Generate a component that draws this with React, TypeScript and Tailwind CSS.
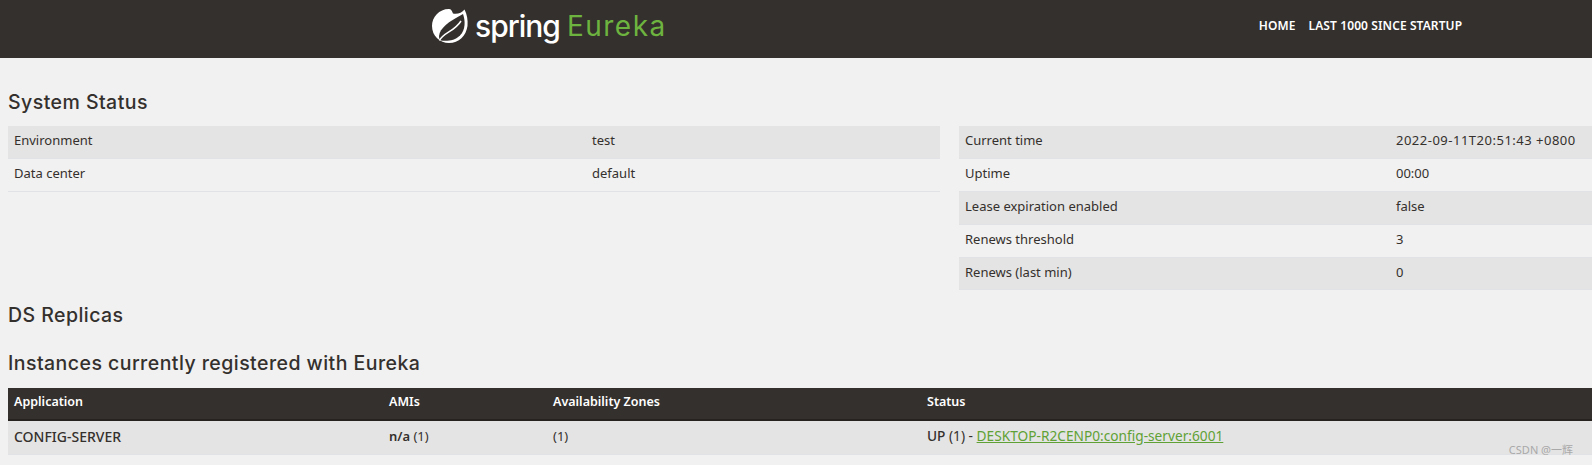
const body = "[font-family:'Noto_Sans',sans-serif]";

const leftRows = [
  ["Environment", "test"],
  ["Data center", "default"],
];

const rightRows = [
  ["Current time", "2022-09-11T20:51:43 +0800"],
  ["Uptime", "00:00"],
  ["Lease expiration enabled", "false"],
  ["Renews threshold", "3"],
  ["Renews (last min)", "0"],
];

function StatusTable({ rows, labelWidth, className }: { rows: string[][]; labelWidth: string; className: string }) {
  return (
    <div className={className}>
      {rows.map(([label, value], i) => (
        <div
          key={label}
          className={`flex h-[32.9px] items-center border-b border-[#e0e2e5] pb-[2px] text-[13px] text-[#34302d] ${i % 2 === 0 ? "bg-[#e4e4e4]" : ""}`}
        >
          <div className={`${labelWidth} shrink-0 px-1.5`}>{label}</div>
          <div className={`px-1.5 ${label === "Current time" ? "tracking-[0.5px]" : ""}`}>{value}</div>
        </div>
      ))}
    </div>
  );
}

function Heading({ children, className }: { children: string; className: string }) {
  return <h1 className={`font-['Inter',sans-serif] text-[19.500px] leading-6 font-medium tracking-[0.45px] text-[#34302d] ${className}`}>{children}</h1>;
}

function SpringLeaf() {
  return (
    <svg width="38" height="36" viewBox="0 0 38 36" className="shrink-0">
      <path
        fill="#fff"
        d="M18 1C8 1 1 9 1 18C1 28 9 35 18 35C28 35 35 28 36.500 18C37 12 36 6 33.500 1.500C31 5 26 6.500 22 5.500C21 3 20 1 18 1Z"
      />
      <path fill="#34302d" d="M8 28C9 20 17 14 32 6C34.500 13 34.500 22 29 27.500C24 32.500 16 33.500 10 32.500C8.500 31.500 8 30 8 28Z" />
      <path fill="none" stroke="#fff" strokeWidth="1.500" d="M8.500 32.500C13 24 23 24 30 13" />
    </svg>
  );
}

export default function App() {
  return (
    <div className={`h-[465px] w-[1592px] overflow-hidden bg-[#f1f1f1] ${body}`}>
      <nav className="flex h-[58px] items-center bg-[#34302d] pb-[6px]">
        <div className="ml-[431px] flex items-center">
          <SpringLeaf />
          <span className="ml-[6px] font-['Inter',sans-serif] text-[30px] leading-none font-medium tracking-[-1px] text-white">spring</span>
          <span className="ml-[7px] font-['Inter',sans-serif] text-[28px] leading-none font-normal tracking-[1.500px] text-[#6db33f]">Eureka</span>
        </div>
        <div className="ml-[592px] flex gap-[13px] text-[12px] font-semibold tracking-[0.1px] text-white">
          <a>HOME</a>
          <a>LAST 1000 SINCE STARTUP</a>
        </div>
      </nav>

      <div className="pl-2">
        <Heading className="mt-[32px]">System Status</Heading>
        <div className="mt-[12px] flex h-[175px] items-start">
          <StatusTable rows={leftRows} labelWidth="w-[578px]" className="w-[932px]" />
          <StatusTable rows={rightRows} labelWidth="w-[431px]" className="ml-[19px] w-[633px]" />
        </div>
        <Heading className="mt-[2px]">DS Replicas</Heading>
        <Heading className="mt-[24px]">Instances currently registered with Eureka</Heading>

        <div className="mt-[13px]">
          <div className="flex h-[33px] items-center border-b-2 border-[#26221f] bg-[#34302d] pb-0.5 text-[12.500px] font-semibold text-white">
            <div className="w-[375px] px-1.5">Application</div>
            <div className="w-[164px] px-1.5">AMIs</div>
            <div className="w-[374px] px-1.5">Availability Zones</div>
            <div className="px-1.5">Status</div>
          </div>
          <div className="relative flex h-[34px] items-center border-b border-[#e0e2e5] bg-[#e4e4e4] pb-0.5 text-[13px] text-[#34302d]">
            <div className="w-[375px] px-1.5 text-[14px] font-medium">CONFIG-SERVER</div>
            <div className="w-[164px] px-1.5"><b className="font-semibold">n/a</b> (1)</div>
            <div className="w-[374px] px-1.5">(1)</div>
            <div className="px-1.5 text-[13.700px]">
              <b className="font-medium">UP</b> (1) - <a className="text-[#5fa134] underline">DESKTOP-R2CENP0:config-server:6001</a>
            </div>
            <span className="absolute top-[22px] right-[19px] font-['Noto_Sans','Noto_Sans_CJK_SC',sans-serif] text-[11px] leading-[14px] text-[#a9a9a9]">CSDN @一辉</span>
          </div>
        </div>
      </div>
    </div>
  );
}
